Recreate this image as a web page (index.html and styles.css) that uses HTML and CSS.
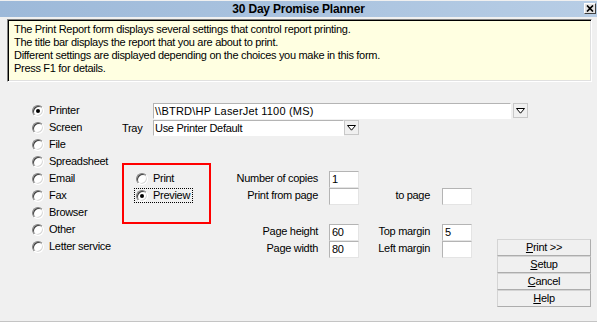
FILE: index.html
```html
<!DOCTYPE html>
<html lang="en">
<head>
    <meta charset="UTF-8">
    <meta name="viewport" content="width=device-width, initial-scale=1.0">
    <title>30 Day Promise Planner</title>
    <link rel="stylesheet" href="styles.css">
</head>
<body>

    <div class="window">

        <div class="titlebar">
            <span class="title">30 Day Promise Planner</span>
            <span class="close">
                <svg width="8" height="7" viewBox="0 0 8 7"><path d="M1 0.5 L7 6.5 M7 0.5 L1 6.5" stroke="#000" stroke-width="1.7"/></svg>
            </span>
        </div>

        <div class="info">
            <p>The Print Report form displays several settings that control report printing.</p>
            <p>The title bar displays the report that you are about to print.</p>
            <p>Different settings are displayed depending on the choices you make in this form.</p>
            <p>Press F1 for details.</p>
        </div>

        <div class="form">
            <ul class="dest">
                <li><span class="radio checked"></span>Printer</li>
                <li><span class="radio"></span>Screen</li>
                <li><span class="radio"></span>File</li>
                <li><span class="radio"></span>Spreadsheet</li>
                <li><span class="radio"></span>Email</li>
                <li><span class="radio"></span>Fax</li>
                <li><span class="radio"></span>Browser</li>
                <li><span class="radio"></span>Other</li>
                <li><span class="radio"></span>Letter service</li>
            </ul>

            <div class="combo printer">
                <span class="combo-field">\\BTRD\HP LaserJet 1100 (MS)</span>
                <span class="combo-btn"><svg width="9" height="6" viewBox="0 0 9 6"><path d="M0.5 0.5 H8.5 L4.5 5.2 Z" fill="#fff" stroke="#000" stroke-width="1"/></svg></span>
            </div>

            <span class="tray-label">Tray</span>
            <div class="combo tray">
                <span class="combo-field">Use Printer Default</span>
                <span class="combo-btn"><svg width="9" height="6" viewBox="0 0 9 6"><path d="M0.5 0.5 H8.5 L4.5 5.2 Z" fill="#fff" stroke="#000" stroke-width="1"/></svg></span>
            </div>

            <div class="mode">
                <div class="mode-row"><span class="opt"><span class="radio"></span>Print</span></div>
                <div class="mode-row"><span class="opt focus"><span class="radio checked"></span>Preview</span></div>
            </div>

            <span class="lbl copies-l">Number of copies</span>
            <span class="field copies-f">1</span>
            <span class="lbl from-l">Print from page</span>
            <span class="field from-f"></span>
            <span class="lbl to-l">to page</span>
            <span class="field to-f"></span>

            <span class="lbl low height-l">Page height</span>
            <span class="field low height-f">60</span>
            <span class="lbl low top-l">Top margin</span>
            <span class="field low top-f">5</span>
            <span class="lbl low width-l">Page width</span>
            <span class="field low width-f">80</span>
            <span class="lbl low left-l">Left margin</span>
            <span class="field low left-f"></span>

            <div class="buttons">
                <span class="btn"><u>P</u>rint &gt;&gt;</span>
                <span class="btn"><u>S</u>etup</span>
                <span class="btn"><u>C</u>ancel</span>
                <span class="btn"><u>H</u>elp</span>
            </div>
        </div>

    </div>

</body>
</html>
```

FILE: styles.css
```css
body, div, ul, li, p {
  margin: 0;
  padding: 0;
}

ul {
  list-style-type: none;
}

body {
  width: 597px;
  height: 322px;
  overflow: hidden;
  background: #f0f0f0;
  color: #000;
  font: 11px/17px "Liberation Sans", Arial, sans-serif;
  letter-spacing: -0.3px;
}

.window {
  height: 320px;
  border-bottom: 2px solid #c4c4c4;
}

/* title bar */
.titlebar {
  display: grid;
  grid-template-columns: 1fr auto 1fr;
  height: 16px;
  margin-top: 1px;
  background: linear-gradient(to right, #9db9d9, #b7cde5);
}

.title {
  grid-column: 2;
  font-weight: 700;
  font-size: 12px;
  line-height: 16px;
  letter-spacing: -0.2px;
}

.close {
  grid-column: 3;
  justify-self: end;
  display: flex;
  align-items: center;
  justify-content: center;
  box-sizing: border-box;
  width: 12px;
  height: 11px;
  margin: 2px 1px 0 0;
  background: #e4e4e4;
  border: 1px solid;
  border-color: #fff #404040 #404040 #fff;
}

/* yellow help text */
.info {
  width: 585px;
  height: 63px;
  box-sizing: border-box;
  margin: 2px 0 0 7px;
  padding: 3px 5px 0;
  background: #ffffe1;
  border: 1px solid;
  border-color: #808080 #fff #fff #808080;
  box-shadow: inset 1px 1px 0 #000, inset -1px -1px 0 #e0e0e0;
  line-height: 13px;
}

.info p {
  padding-left: 1px;
}

/* form grid, every row 17px */
.form {
  display: grid;
  grid-template-columns: 90px 31px 58px 118px 30px 83px 30px 25px 94px;
  grid-auto-rows: 17px;
  padding-left: 32px;
  margin-top: 20px;
}

.dest {
  grid-column: 1;
  grid-row: 1 / 10;
  display: grid;
  grid-auto-rows: 17px;
}

.dest li,
.opt {
  display: flex;
  align-items: center;
  gap: 5px;
}

.radio {
  position: relative;
  display: inline-block;
  box-sizing: border-box;
  width: 12px;
  height: 12px;
  border-radius: 50%;
  background: #fff;
  border: 1px solid;
  border-color: #808080 #fff #fff #808080;
  box-shadow: inset 1px 1px 0 #404040, inset -1px -1px 0 #d8d8d8;
}

.radio.checked::after {
  content: "";
  position: absolute;
  left: 3px;
  top: 3px;
  width: 4px;
  height: 4px;
  border-radius: 50%;
  background: #000;
}

/* combo boxes */
.combo {
  display: flex;
  align-items: center;
  grid-column: 3 / -1;
}

.printer {
  grid-row: 1;
}

.tray {
  grid-row: 2;
}

.combo-field {
  box-sizing: border-box;
  height: 16px;
  line-height: 14px;
  padding-left: 1px;
  background: #fff;
  border: 1px solid;
  border-color: #b4b4b4 #fff #fff #b4b4b4;
}

.printer .combo-field {
  width: 358px;
  margin-right: 2px;
  letter-spacing: 0.2px;
}

.tray .combo-field {
  width: 191px;
  margin-right: 0;
}

.combo-btn {
  display: flex;
  align-items: center;
  justify-content: center;
  box-sizing: border-box;
  width: 15px;
  height: 15px;
  background: #f0f0f0;
  border: 1px solid #c8c8c8;
}

.tray-label {
  grid-column: 2;
  grid-row: 2;
  line-height: 18px;
}

/* print / preview box */
.mode {
  grid-column: 2 / 4;
  grid-row: 4 / 9;
  align-self: start;
  box-sizing: border-box;
  height: 61px;
  margin-top: 10px;
  padding-top: 5px;
  border: 2px solid #f00;
}

.mode-row {
  display: flex;
  align-items: center;
  height: 17px;
  padding-left: 10px;
}

.opt {
  height: 15px;
  box-sizing: border-box;
  padding: 0 2px 0 1px;
  border: 1px solid transparent;
}

.opt.focus {
  border: 1px dotted #000;
}

/* numeric settings */
.lbl {
  text-align: right;
  padding-right: 11px;
}

.field {
  box-sizing: border-box;
  height: 17px;
  margin-top: 1px;
  padding-left: 2px;
  line-height: 15px;
  background: #fff;
  border: 1px solid;
  border-color: #b4b4b4 #e4e4e4 #e4e4e4 #b4b4b4;
}

.lbl.low {
  margin-top: 2px;
}

.field.low {
  margin-top: 3px;
}

.copies-l { grid-area: 5 / 4; }
.copies-f { grid-area: 5 / 5; }
.from-l { grid-area: 6 / 4; }
.from-f { grid-area: 6 / 5; }
.to-l { grid-area: 6 / 6; padding-right: 12px; }
.to-f { grid-area: 6 / 7; }
.height-l { grid-area: 8 / 4; }
.height-f { grid-area: 8 / 5; }
.top-l { grid-area: 8 / 6; padding-right: 12px; }
.top-f { grid-area: 8 / 7; }
.width-l { grid-area: 9 / 4; }
.width-f { grid-area: 9 / 5; }
.left-l { grid-area: 9 / 6; padding-right: 12px; }
.left-f { grid-area: 9 / 7; }

/* buttons */
.buttons {
  grid-column: 9;
  grid-row: 8 / 13;
  align-self: start;
  display: flex;
  flex-direction: column;
  margin-top: 18px;
}

.btn {
  box-sizing: border-box;
  height: 17px;
  line-height: 15px;
  text-align: center;
  background: #f0f0f0;
  border: 1px solid;
  border-color: #d4d4d4 #adadad #adadad #d4d4d4;
}
```
